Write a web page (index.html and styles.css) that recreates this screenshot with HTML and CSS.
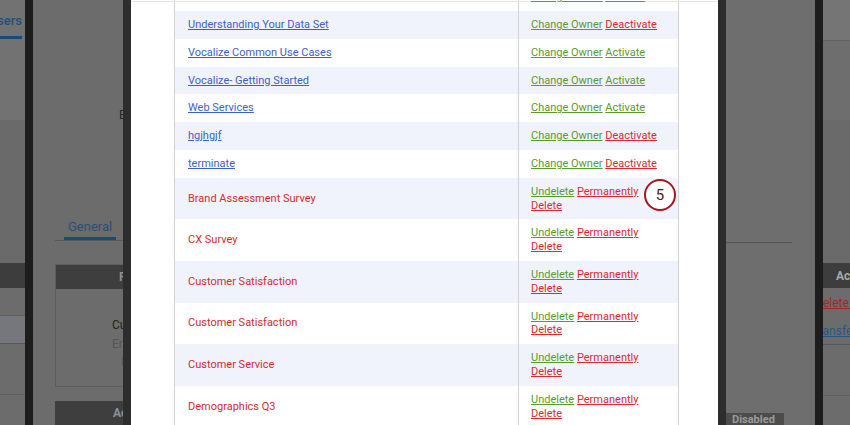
FILE: index.html
```html
<!DOCTYPE html>
<html lang="en">
<head>
  <meta charset="UTF-8">
  <title>Survey Ownership</title>
  <link rel="stylesheet" href="styles.css">
</head>
<body>
  <!-- page behind the modal, dimmed -->
  <div class="strip strip-left">
    <div class="tabbar"><span class="tab">Users</span></div>
    <div class="band band-light"></div>
    <div class="band band-mid"></div>
    <div class="bg-thead"></div>
    <div class="bg-row"></div>
    <div class="bg-row bg-row-hl"></div>
    <div class="bg-row bg-row-tall"></div>
  </div>
  <div class="edge edge-black"></div>
  <div class="panel panel-left">
    <div class="ghost-text ghost-enable">Enable</div>
    <div class="tabs">
      <span class="tab-general">General</span>
      <span class="tab-check">&#10003;</span>
    </div>
    <div class="bg-box">
      <div class="bg-box-head">Profile</div>
      <div class="ghost-text ghost-cu">Customer</div>
      <div class="ghost-text ghost-en">Enabled</div>
      <div class="ghost-text ghost-p">P</div>
    </div>
    <div class="bg-box-head bg-box-next">Account</div>
  </div>
  <div class="edge"></div>

  <div class="modal">
    <table class="owners">
      <tbody>
        <tr>
          <td class="name"><a href="#">Tradeshow Event Feedback Results</a></td>
          <td class="acts"><a class="ok" href="#">Change Owner</a> <a class="ok" href="#">Activate</a></td>
        </tr>
        <tr>
          <td class="name"><a href="#">Understanding Your Data Set</a></td>
          <td class="acts"><a class="ok" href="#">Change Owner</a> <a class="bad" href="#">Deactivate</a></td>
        </tr>
        <tr>
          <td class="name"><a href="#">Vocalize Common Use Cases</a></td>
          <td class="acts"><a class="ok" href="#">Change Owner</a> <a class="ok" href="#">Activate</a></td>
        </tr>
        <tr>
          <td class="name"><a href="#">Vocalize- Getting Started</a></td>
          <td class="acts"><a class="ok" href="#">Change Owner</a> <a class="ok" href="#">Activate</a></td>
        </tr>
        <tr>
          <td class="name"><a href="#">Web Services</a></td>
          <td class="acts"><a class="ok" href="#">Change Owner</a> <a class="ok" href="#">Activate</a></td>
        </tr>
        <tr>
          <td class="name"><a href="#">hgjhgjf</a></td>
          <td class="acts"><a class="ok" href="#">Change Owner</a> <a class="bad" href="#">Deactivate</a></td>
        </tr>
        <tr>
          <td class="name"><a href="#">terminate</a></td>
          <td class="acts"><a class="ok" href="#">Change Owner</a> <a class="bad" href="#">Deactivate</a></td>
        </tr>
        <tr>
          <td class="name deleted">Brand Assessment Survey</td>
          <td class="acts"><a class="ok" href="#">Undelete</a> <a class="bad" href="#">Permanently Delete</a><span class="callout">5</span></td>
        </tr>
        <tr>
          <td class="name deleted">CX Survey</td>
          <td class="acts"><a class="ok" href="#">Undelete</a> <a class="bad" href="#">Permanently Delete</a></td>
        </tr>
        <tr>
          <td class="name deleted">Customer Satisfaction</td>
          <td class="acts"><a class="ok" href="#">Undelete</a> <a class="bad" href="#">Permanently Delete</a></td>
        </tr>
        <tr>
          <td class="name deleted">Customer Satisfaction</td>
          <td class="acts"><a class="ok" href="#">Undelete</a> <a class="bad" href="#">Permanently Delete</a></td>
        </tr>
        <tr>
          <td class="name deleted">Customer Service</td>
          <td class="acts"><a class="ok" href="#">Undelete</a> <a class="bad" href="#">Permanently Delete</a></td>
        </tr>
        <tr>
          <td class="name deleted">Demographics Q3</td>
          <td class="acts"><a class="ok" href="#">Undelete</a> <a class="bad" href="#">Permanently Delete</a></td>
        </tr>
      </tbody>
    </table>
  </div>

  <div class="edge"></div>
  <div class="panel panel-right">
    <div class="panel-rule"></div>
    <div class="btn-disabled">Disabled</div>
  </div>
  <div class="edge edge-black"></div>
  <div class="strip strip-right">
    <div class="band band-top"></div>
    <div class="band band-top2"></div>
    <div class="band band-mid band-short"></div>
    <div class="bg-thead"><span class="thead-text">Actions</span></div>
    <div class="bg-row bg-link"><span class="link-red">Delete User</span></div>
    <div class="bg-row bg-link bg-row-line"><span class="link-blue">Transfer Surveys</span></div>
    <div class="bg-row bg-row-tall"></div>
  </div>
</body>
</html>
```

FILE: styles.css
```css
html, body {
  margin: 0;
  height: 425px;
  overflow: hidden;
}

body {
  display: flex;
  background: #6c6c6c;
  font-family: Roboto, "Liberation Sans", sans-serif;
}

/* ---------- dimmed page behind the modal ---------- */

.strip {
  display: flex;
  flex-direction: column;
  overflow: hidden;
}

.strip-left {
  width: 25px;
}

.strip-right {
  flex: 1;
}

.edge {
  width: 8px;
  flex-shrink: 0;
  background: #2d2d2d;
}

.edge-black {
  background: #1d1d1d;
}

.tabbar {
  height: 39px;
  display: flex;
  justify-content: flex-end;
  align-items: flex-end;
  background: #727272;
  overflow: hidden;
}

.tab {
  padding-bottom: 8px;
  margin-right: 3px;
  border-bottom: 3px solid #1c4a74;
  color: #1f4f7c;
  font-size: 13px;
  font-weight: 500;
  white-space: nowrap;
}

.band {
  flex-shrink: 0;
}

.band-light {
  height: 81px;
  background: #727272;
}

.band-mid {
  height: 143px;
  background: #6a6a6a;
}

.band-top {
  height: 40px;
  background: #757575;
  border-bottom: 1px solid #626262;
}

.band-top2 {
  height: 79px;
  background: #6e6e6e;
}

.band-short {
  height: 143px;
}

.bg-thead {
  height: 25px;
  flex-shrink: 0;
  background: #3d3d3d;
  display: flex;
  align-items: center;
  color: #a5a9ad;
  font-size: 12px;
  font-weight: 700;
}

.thead-text {
  margin-left: 13px;
}

.bg-row {
  height: 27px;
  flex-shrink: 0;
  border-bottom: 1px solid #606060;
}

.bg-row-hl {
  background: #75777c;
  border-bottom-color: #575757;
}

.bg-row-tall {
  height: 50px;
}

.bg-link {
  display: flex;
  align-items: center;
  padding-top: 2px;
  height: 26px;
  font-size: 12px;
  white-space: nowrap;
  border-bottom: none;
}

.bg-row-line {
  border-bottom: 1px solid #575757;
}

.link-red {
  color: #9c2a2a;
  text-decoration: underline;
  margin-left: -8px;
}

.link-blue {
  color: #2a5683;
  text-decoration: underline;
  margin-left: -11px;
}

.panel {
  flex-shrink: 0;
  background: #6c6c6c;
  display: flex;
  flex-direction: column;
  overflow: hidden;
}

.panel-left {
  width: 90px;
  padding-left: 22px;
  box-sizing: border-box;
}

.panel-right {
  width: 89px;
  background: #6e6e6e;
}

.ghost-text {
  white-space: nowrap;
  font-size: 12px;
}

.ghost-enable {
  margin: 108px 0 0 64px;
  color: #262626;
}

.tabs {
  margin-top: 97px;
  height: 22px;
  display: flex;
  gap: 8px;
  border-bottom: 1px solid #5a5a5a;
  white-space: nowrap;
}

.tab-general {
  margin-left: 9px;
  padding: 0 4px;
  height: 18px;
  border-bottom: 3px solid #1c4a74;
  color: #2a4f75;
  font-size: 13px;
}

.tab-check {
  color: #555;
  font-size: 12px;
}

.bg-box {
  margin-top: 23px;
  height: 139px;
  border: 1px solid #5e5e5e;
  border-right: none;
  display: flex;
  flex-direction: column;
}

.bg-box-head {
  height: 24px;
  flex-shrink: 0;
  background: #3e3e3e;
  color: #8c9097;
  font-size: 12px;
  font-weight: 700;
  line-height: 24px;
  padding-left: 63px;
  white-space: nowrap;
}

.bg-box-next {
  margin-top: 14px;
  padding-left: 58px;
}

.ghost-cu {
  margin: 29px 0 0 56px;
  color: #202020;
}

.ghost-en {
  margin: 5px 0 0 56px;
  color: #555;
}

.ghost-p {
  margin: 4px 0 0 65px;
  color: #5a5a5a;
}

.panel-rule {
  margin-top: 242px;
  width: 66px;
  border-top: 1px solid #555;
}

.btn-disabled {
  margin-top: auto;
  width: 52px;
  height: 12px;
  padding-left: 6px;
  background: #4c4c4c;
  color: #9b9b9b;
  font-size: 11px;
  font-weight: 700;
  line-height: 14px;
  overflow: hidden;
}

/* ---------- modal ---------- */

.modal {
  position: relative;
  width: 587px;
  flex-shrink: 0;
  background: #fff;
  padding-left: 43px;
  box-sizing: border-box;
  overflow: hidden;
}

.modal::before {
  content: "";
  position: absolute;
  top: 1px;
  left: 0;
  right: 0;
  height: 1px;
  background: #e4e4e4;
}

.owners {
  width: 505px;
  margin-top: -16.8px;
  border-collapse: collapse;
  border-left: 1px solid #d2d2d2;
  border-right: 1px solid #d2d2d2;
  font-size: 11px;
  line-height: 13.8px;
}

.owners tr:nth-child(even) {
  background: #f0f3fc;
}

.owners td {
  padding: 7px 12px;
  vertical-align: middle;
  text-align: left;
}

.name {
  width: 318px;
  padding-left: 13px !important;
}

.name a {
  color: #3e5fc8;
}

.deleted {
  color: #d42c31;
}

.acts {
  position: relative;
  border-left: 1px solid #d2d2d2;
}

.ok {
  color: #5b9a2d;
}

.bad {
  color: #dc2a31;
}

.callout {
  position: absolute;
  left: 125px;
  top: 1.5px;
  width: 28px;
  height: 28px;
  border: 2.5px solid #a8141f;
  border-radius: 50%;
  background: #fff;
  color: #5a1414;
  font-size: 15px;
  line-height: 28px;
  text-align: center;
}
```
